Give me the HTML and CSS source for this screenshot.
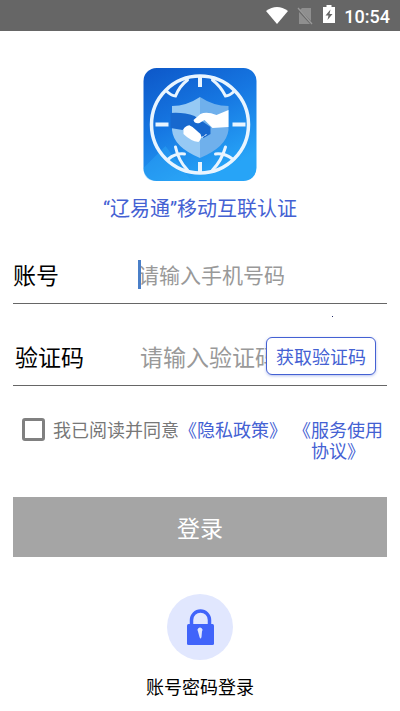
FILE: index.html
```
<!DOCTYPE html>
<html lang="zh-CN">
<head>
    <meta charset="UTF-8">
    <meta name="viewport" content="width=device-width, initial-scale=1.0">
    <title>“辽易通”移动互联认证</title>
    <link rel="stylesheet" href="styles.css">
</head>
<body>

    <header class="status-bar">
        <svg class="wifi" viewBox="0 0 22 17" width="22" height="17">
            <path d="M11 17 L0 4 Q11 -4 22 4 Z" fill="#fff"/>
        </svg>
        <svg class="sim" viewBox="0 0 16 18" width="16" height="18">
            <path d="M5 1 H14 V14 L3 3 Z M2 5 L13 17 H2 Z" fill="#8f8f8f"/>
            <path d="M1 1 L15 17" stroke="#999" stroke-width="1.3"/>
        </svg>
        <svg class="battery" viewBox="0 0 12 18" width="12" height="18">
            <path d="M3.5 0 H8.500 V2 H12 V18 H0 V2 H3.500 Z" fill="#fff"/>
            <path d="M7.500 4.500 L2.500 10.500 H5.500 L4.500 15 L9.500 9 H6.500 Z" fill="#666"/>
        </svg>
        <span class="time">10:54</span>
    </header>

    <main class="container">
        <svg class="logo" viewBox="0 0 113 113" width="114" height="113">
            <defs>
                <linearGradient id="sky" x1="0" y1="0" x2="0.500" y2="1">
                    <stop offset="0" stop-color="#0d57c8"/>
                    <stop offset="0.500" stop-color="#1677e2"/>
                    <stop offset="1" stop-color="#27a4f7"/>
                </linearGradient>
            </defs>
            <rect width="113" height="113" rx="13" fill="url(#sky)"/>
            <path d="M0 100 L22 78 L48 113 H13 Q0 113 0 100 Z" fill="#2fa9f8" opacity="0.4"/>
            <!-- shield -->
            <path d="M56.500 29 Q43 38 28.500 38 V62 Q30 79 56.500 90 Z" fill="#96c9f4"/>
            <path d="M56.500 29 Q70 38 85 38 V62 Q83 79 56.500 90 Z" fill="#6fb0ec"/>
            <!-- globe -->
            <g fill="none" stroke="#e9f5ff" stroke-linecap="round">
                <circle cx="56.500" cy="56.500" r="48.500" stroke-width="3.500"/>
                <path d="M12 56.500 H25 M89 56.500 H102 M56.500 9 V19 M56.500 94 V104" stroke-width="4" stroke-linecap="butt"/>
                <path d="M44 12 Q36 18 32 28 Q28 28 23 23 M69 12 Q77 18 82 28 Q86 28 91 23" stroke-width="3"/>
                <path d="M44 102 Q35 93 32 79 M25 91 Q32 85 41 86 M69 102 Q78 93 82 79 M89 91 Q81 85 72 86" stroke-width="3"/>
            </g>
            <!-- handshake -->
            <path d="M27 45 Q40 44 51 48 L67 59 L67 66 L60 70 L46 57 L39 62 L27 60 Z" fill="#1768ce"/>
            <path d="M85 42 L73 47 Q63 43 57 46 L50 52 Q51 56 56 55 L61 52 L69 60 L85 59 Z" fill="#fff"/>
            <path d="M40 61 Q44 55 49 59 L57 66 Q59 70 55 74 Q47 73 40 66 Z" fill="#fff"/>
            <path d="M58 70 L60 68 M61 68 L63 66" stroke="#fff"/>
        </svg>
        <h1 class="title">“辽易通”移动互联认证</h1>

        <form class="login-form">
            <div class="field focused">
                <label for="phone">账号</label>
                <div class="field-input">
                    <input type="tel" id="phone" placeholder="请输入手机号码">
                </div>
            </div>

            <div class="field code">
                <label for="code">验证码</label>
                <div class="field-input">
                    <input type="text" id="code" placeholder="请输入验证码">
                </div>
                <button type="button" class="code-btn">获取验证码</button>
            </div>

            <div class="agreement">
                <input type="checkbox" id="agree">
                <label for="agree">我已阅读并同意</label>
                <a href="#">《隐私政策》</a>
                <a href="#" class="service">《服务使用协议》</a>
            </div>

            <button type="submit" class="login-btn">登录</button>
        </form>

        <a href="#" class="password-login">
            <svg viewBox="0 0 66 66" width="66" height="66">
                <circle cx="33" cy="33" r="33" fill="#e1e7fe"/>
                <path d="M24.500 31 V26 a9 9 0 0 1 18 0 V31" fill="none" stroke="#4164fa" stroke-width="3.500"/>
                <rect x="20" y="30" width="27" height="21" rx="1.500" fill="#4164fa"/>
                <path d="M31 37.500 a2.500 2.500 0 1 1 4 0 L34.500 43 Q33.500 46 32.500 43 Z" fill="#e1e7fe"/>
            </svg>
            <span>账号密码登录</span>
        </a>
    </main>

</body>
</html>
```
FILE: styles.css
```
* {
    box-sizing: border-box;
}
body {
    margin: 0;
    background: #fff;
    color: #000;
    font-family: "Noto Sans CJK SC", sans-serif;
}
input, button {
    font-family: inherit;
}
.status-bar {
    display: flex;
    align-items: center;
    justify-content: flex-end;
    height: 31px;
    padding: 0 10px;
    background: #666;
}
.sim {
    margin-left: 9px;
}
.battery {
    margin: 0 9px 4px 10px;
}
.time {
    color: #fff;
    font-family: Roboto, sans-serif;
    font-size: 18px;
    font-weight: 500;
    line-height: 24px;
    padding-top: 3px;
}
.container {
    display: flex;
    flex-direction: column;
    align-items: center;
    padding: 37px 13px 0;
}
.title {
    margin: 12px 0 0;
    color: #4461d3;
    font-family: Roboto, "Noto Sans CJK SC", sans-serif;
    font-size: 20px;
    font-weight: 400;
    line-height: 32px;
}
.login-form {
    width: 100%;
    margin-top: 22px;
}
.field {
    position: relative;
    display: flex;
    align-items: center;
    height: 57px;
    padding-bottom: 2px;
    border-bottom: 1px solid #666;
}
.field label {
    width: 125px;
    font-size: 23px;
}
.field-input {
    position: relative;
    flex: 1;
    min-width: 0;
}
.field input {
    display: block;
    width: 100%;
    height: 30px;
    padding: 0;
    border: none;
    outline: none;
    background: none;
    color: #000;
    font-size: 21px;
}
.field input::placeholder {
    color: #999;
    opacity: 1;
}
/* text cursor of the active field */
.focused .field-input::before {
    content: "";
    position: absolute;
    top: 1px;
    left: 0;
    width: 3px;
    height: 29px;
    background: #4a7fc8;
}
.field.code {
    height: 58px;
    margin-top: 24px;
    padding: 0 11px 2px 2px;
}
.code::before {
    content: "";
    position: absolute;
    top: -12px;
    right: 54px;
    width: 1px;
    height: 1px;
    background: #222a66;
}
.code input {
    font-size: 23px;
}
.code-btn {
    height: 38px;
    padding: 0 9px;
    border: 1px solid #4461d3;
    border-radius: 6px;
    background: #fff;
    box-shadow: 0 1px 3px rgba(68, 97, 211, 0.4);
    color: #4461d3;
    font-size: 18px;
    white-space: nowrap;
}
.agreement {
    display: flex;
    align-items: flex-start;
    margin-top: 33px;
    padding-right: 2px;
    color: #777;
    font-size: 18px;
    line-height: 21px;
}
.agreement input {
    appearance: none;
    flex: none;
    width: 23px;
    height: 23px;
    margin: -1px 8px 0 9px;
    border: 3px solid #808080;
    border-radius: 3px;
}
.agreement input:checked {
    background: #4461d3;
}
.agreement label, .agreement a {
    white-space: nowrap;
}
.agreement a {
    color: #4461d3;
    text-decoration: none;
}
.agreement .service {
    flex: 1;
    margin-left: 4px;
    text-align: center;
    white-space: normal;
}
.login-btn {
    display: block;
    width: 100%;
    height: 60px;
    margin-top: 36px;
    border: none;
    background: #a5a5a5;
    color: #fff;
    font-size: 23px;
}
.password-login {
    display: flex;
    flex-direction: column;
    align-items: center;
    margin-top: 37px;
    color: #000;
    font-size: 18px;
    line-height: 26px;
    text-decoration: none;
}
.password-login span {
    margin-top: 13px;
}
```
